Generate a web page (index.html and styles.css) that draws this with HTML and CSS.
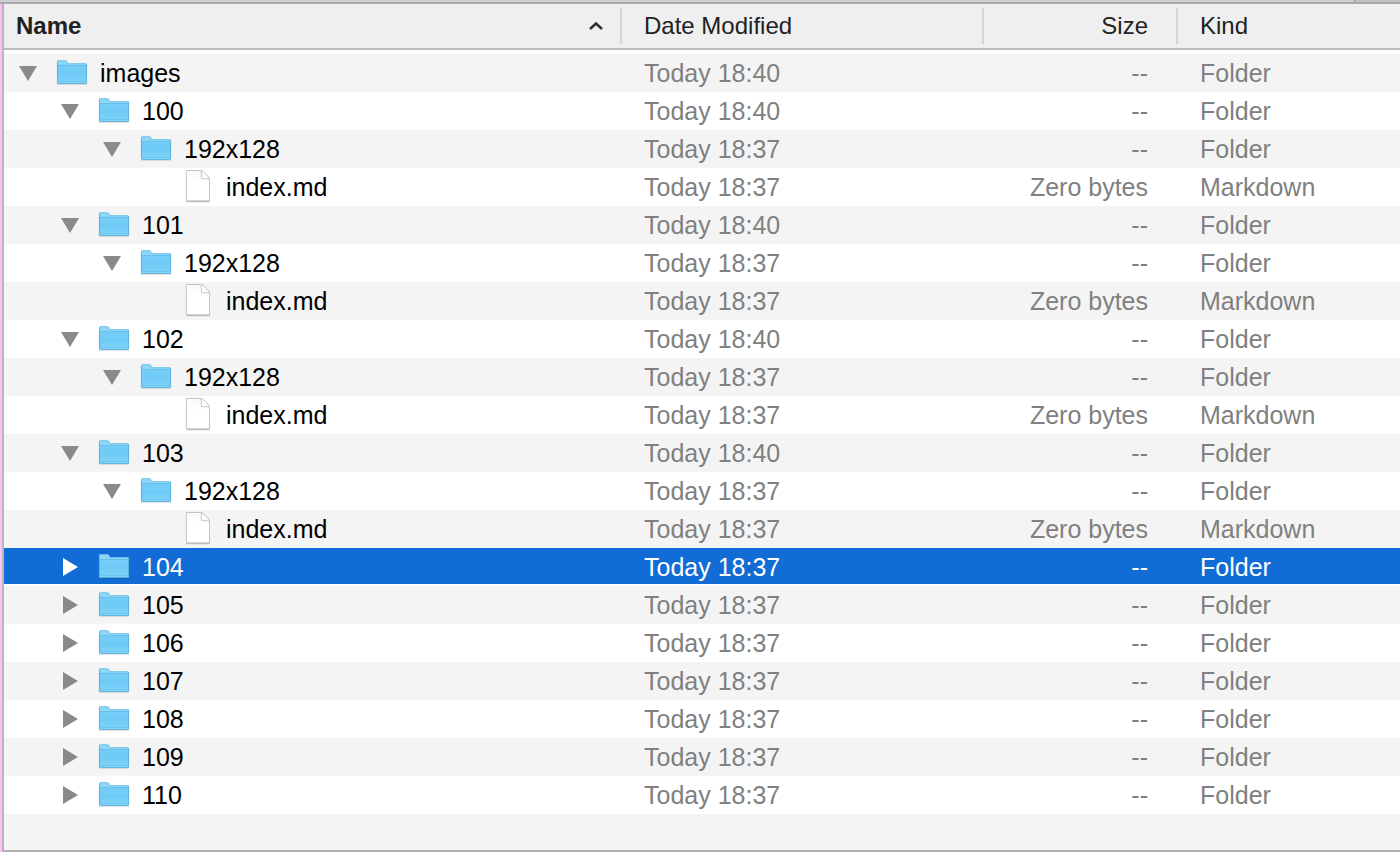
FILE: index.html
```html
<!DOCTYPE html>
<html lang="en">
<head>
<meta charset="utf-8">
<title>images</title>
<link rel="stylesheet" href="styles.css">
</head>
<body>
<svg class="defs" aria-hidden="true">
  <defs>
    <linearGradient id="blue" x1="0" y1="0" x2="0" y2="1">
      <stop offset="0" stop-color="#74cdf7"/>
      <stop offset="0.5" stop-color="#6ecbf6"/>
      <stop offset="1" stop-color="#84d4fa"/>
    </linearGradient>
    <linearGradient id="paper" x1="0" y1="0" x2="0" y2="1">
      <stop offset="0" stop-color="#f9f9f9"/>
      <stop offset="0.4" stop-color="#ffffff"/>
    </linearGradient>
    <symbol id="folder" viewBox="0 0 32 38">
      <path d="M1 29.5h30v1.2H1z" fill="#000" opacity="0.16"/>
      <path d="M1 7.5Q1 6.300 2.200 6.300H9.500Q10.500 6.300 11 7.200L11.600 8.400Q12 9.300 13 9.300H30Q31 9.300 31 10.300V14H1z" fill="#8dd6f8"/>
      <path d="M1 11.500H31V28.800Q31 29.800 30 29.800H2Q1 29.800 1 28.800z" fill="url(#blue)"/>
      <path d="M1 11.500H31" stroke="#5dbce8" stroke-width="0.800"/>
      <path d="M1.500 27.500H30.500" stroke="#62bde6" stroke-width="0.600"/>
      <path d="M1.400 8V28.800Q1.400 29.500 2.200 29.500H29.800Q30.600 29.500 30.600 28.800V10" fill="none" stroke="#57acd3" stroke-width="0.800"/>
      <path d="M1.400 8Q1.400 6.700 2.400 6.700H9.500Q10.300 6.700 10.700 7.500L11.300 8.700Q11.700 9.600 12.700 9.600H30" fill="none" stroke="#69bfe4" stroke-width="0.700"/>
    </symbol>
    <symbol id="file" viewBox="0 0 32 38">
      <path d="M4.500 34H28" stroke="#000" stroke-width="1" opacity="0.100"/>
      <path d="M5 2.500H18.500C21 2.500 27.500 9 27.500 11.500V33H5Q4.300 33 4.300 32.300V3.200Q4.300 2.500 5 2.500z" fill="url(#paper)" stroke="#c3c3c3" stroke-width="1"/>
      <path d="M18.500 2.500C20 4 19 8 19.500 10.500C22 11 26 10 27.500 11.500C27 8.500 21.500 3 18.500 2.500z" fill="#fff" stroke="#c8c8c8" stroke-width="1"/>
      <path d="M4.300 33.200H27.700" stroke="#aaa" stroke-width="0.800"/>
    </symbol>
    <symbol id="open" viewBox="0 0 24 38"><path d="M3 12H21L12 27z"/></symbol>
    <symbol id="closed" viewBox="0 0 24 38"><path d="M5 10L20 19L5 28z"/></symbol>
  </defs>
</svg>
<div class="tabs"><div class="tab"></div><div class="tab tab-back"></div></div>
<main class="window">
<table class="list">
<colgroup><col><col class="col-date"><col class="col-size"><col class="col-kind"></colgroup>
<thead>
<tr>
  <th scope="col" aria-sort="ascending"><button class="sort">Name<svg class="caret" viewBox="0 0 16 10" aria-hidden="true"><path d="M2 8L8 2.500L14 8"/></svg></button></th>
  <th scope="col"><button class="sort">Date Modified</button></th>
  <th scope="col" class="size"><button class="sort">Size</button></th>
  <th scope="col"><button class="sort">Kind</button></th>
</tr>
</thead>
<tbody>
<tr><td><div class="item"><button class="toggle" aria-label="Collapse images"><svg><use href="#open"/></svg></button><svg class="icon"><use href="#folder"/></svg><span>images</span></div></td><td>Today 18:40</td><td class="size">--</td><td>Folder</td></tr>
<tr><td><div class="item level-1"><button class="toggle" aria-label="Collapse 100"><svg><use href="#open"/></svg></button><svg class="icon"><use href="#folder"/></svg><span>100</span></div></td><td>Today 18:40</td><td class="size">--</td><td>Folder</td></tr>
<tr><td><div class="item level-2"><button class="toggle" aria-label="Collapse 192x128"><svg><use href="#open"/></svg></button><svg class="icon"><use href="#folder"/></svg><span>192x128</span></div></td><td>Today 18:37</td><td class="size">--</td><td>Folder</td></tr>
<tr><td><div class="item level-3"><svg class="icon"><use href="#file"/></svg><span>index.md</span></div></td><td>Today 18:37</td><td class="size">Zero bytes</td><td>Markdown</td></tr>
<tr><td><div class="item level-1"><button class="toggle" aria-label="Collapse 101"><svg><use href="#open"/></svg></button><svg class="icon"><use href="#folder"/></svg><span>101</span></div></td><td>Today 18:40</td><td class="size">--</td><td>Folder</td></tr>
<tr><td><div class="item level-2"><button class="toggle" aria-label="Collapse 192x128"><svg><use href="#open"/></svg></button><svg class="icon"><use href="#folder"/></svg><span>192x128</span></div></td><td>Today 18:37</td><td class="size">--</td><td>Folder</td></tr>
<tr><td><div class="item level-3"><svg class="icon"><use href="#file"/></svg><span>index.md</span></div></td><td>Today 18:37</td><td class="size">Zero bytes</td><td>Markdown</td></tr>
<tr><td><div class="item level-1"><button class="toggle" aria-label="Collapse 102"><svg><use href="#open"/></svg></button><svg class="icon"><use href="#folder"/></svg><span>102</span></div></td><td>Today 18:40</td><td class="size">--</td><td>Folder</td></tr>
<tr><td><div class="item level-2"><button class="toggle" aria-label="Collapse 192x128"><svg><use href="#open"/></svg></button><svg class="icon"><use href="#folder"/></svg><span>192x128</span></div></td><td>Today 18:37</td><td class="size">--</td><td>Folder</td></tr>
<tr><td><div class="item level-3"><svg class="icon"><use href="#file"/></svg><span>index.md</span></div></td><td>Today 18:37</td><td class="size">Zero bytes</td><td>Markdown</td></tr>
<tr><td><div class="item level-1"><button class="toggle" aria-label="Collapse 103"><svg><use href="#open"/></svg></button><svg class="icon"><use href="#folder"/></svg><span>103</span></div></td><td>Today 18:40</td><td class="size">--</td><td>Folder</td></tr>
<tr><td><div class="item level-2"><button class="toggle" aria-label="Collapse 192x128"><svg><use href="#open"/></svg></button><svg class="icon"><use href="#folder"/></svg><span>192x128</span></div></td><td>Today 18:37</td><td class="size">--</td><td>Folder</td></tr>
<tr><td><div class="item level-3"><svg class="icon"><use href="#file"/></svg><span>index.md</span></div></td><td>Today 18:37</td><td class="size">Zero bytes</td><td>Markdown</td></tr>
<tr class="selected"><td><div class="item level-1"><button class="toggle" aria-label="Expand 104"><svg><use href="#closed"/></svg></button><svg class="icon"><use href="#folder"/></svg><span>104</span></div></td><td>Today 18:37</td><td class="size">--</td><td>Folder</td></tr>
<tr><td><div class="item level-1"><button class="toggle" aria-label="Expand 105"><svg><use href="#closed"/></svg></button><svg class="icon"><use href="#folder"/></svg><span>105</span></div></td><td>Today 18:37</td><td class="size">--</td><td>Folder</td></tr>
<tr><td><div class="item level-1"><button class="toggle" aria-label="Expand 106"><svg><use href="#closed"/></svg></button><svg class="icon"><use href="#folder"/></svg><span>106</span></div></td><td>Today 18:37</td><td class="size">--</td><td>Folder</td></tr>
<tr><td><div class="item level-1"><button class="toggle" aria-label="Expand 107"><svg><use href="#closed"/></svg></button><svg class="icon"><use href="#folder"/></svg><span>107</span></div></td><td>Today 18:37</td><td class="size">--</td><td>Folder</td></tr>
<tr><td><div class="item level-1"><button class="toggle" aria-label="Expand 108"><svg><use href="#closed"/></svg></button><svg class="icon"><use href="#folder"/></svg><span>108</span></div></td><td>Today 18:37</td><td class="size">--</td><td>Folder</td></tr>
<tr><td><div class="item level-1"><button class="toggle" aria-label="Expand 109"><svg><use href="#closed"/></svg></button><svg class="icon"><use href="#folder"/></svg><span>109</span></div></td><td>Today 18:37</td><td class="size">--</td><td>Folder</td></tr>
<tr><td><div class="item level-1"><button class="toggle" aria-label="Expand 110"><svg><use href="#closed"/></svg></button><svg class="icon"><use href="#folder"/></svg><span>110</span></div></td><td>Today 18:37</td><td class="size">--</td><td>Folder</td></tr>
</tbody>
</table>
<div class="rest"></div>
</main>
</body>
</html>
```
FILE: styles.css
```css
* {
  box-sizing: border-box;
}

body {
  margin: 0;
  min-height: 100vh;
  display: flex;
  flex-direction: column;
  background: #fff;
  color: #000;
  font-family: "Liberation Sans", Arial, sans-serif;
  font-size: 25px;
  line-height: 38px;
}

button {
  margin: 0;
  padding: 0;
  border: 0;
  background: none;
  color: inherit;
  font: inherit;
}

.defs {
  position: absolute;
  width: 0;
  height: 0;
}

.tabs {
  display: flex;
  height: 4px;
  border-bottom: 2px solid #aaa;
}

.tab {
  flex: 1;
  background: #d0d0d0;
}

.tab-back {
  flex: 0 0 46px;
  border-left: 2px solid #aaa;
  background: #c0c0c0;
}

.window {
  flex: 1;
  display: flex;
  flex-direction: column;
  border-left: 2px solid #b7b7b7;
  border-bottom: 2px solid #b3b3b3;
  margin-left: 2px;
  box-shadow: -2px 0 #fbc0fb;
}

.list {
  width: 100%;
  table-layout: fixed;
  border-collapse: separate;
  border-spacing: 0;
}

.col-date {
  width: 362px;
}

.col-size {
  width: 194px;
}

.col-kind {
  width: 224px;
}

th {
  height: 46px;
  padding: 4px 0 4px;
  border-bottom: 2px solid #bbb;
  background: #efefef;
  color: #222;
  font-size: 24px;
  font-weight: 400;
  line-height: 36px;
  text-align: left;
}

.sort {
  display: block;
  width: 100%;
  padding: 0 28px 0 22px;
  border-left: 2px solid #d5d5d5;
  text-align: inherit;
}

th:first-child .sort {
  display: flex;
  align-items: center;
  justify-content: space-between;
  padding: 0 16px 0 12px;
  border-left: 0;
  font-weight: 700;
}

.caret {
  width: 16px;
  height: 10px;
  fill: none;
  stroke: #333;
  stroke-width: 2.500;
}

td {
  height: 38px;
  padding: 0 0 0 24px;
  color: #808080;
  white-space: nowrap;
}

td:first-child {
  padding: 0 0 0 12px;
  color: #000;
}

.list .size {
  text-align: right;
}

td.size {
  padding-right: 28px;
}

tbody::before {
  content: "";
  display: table-row;
  height: 4px;
}

tbody tr:nth-child(odd) {
  background: #f4f4f4;
}

tbody .selected {
  background: linear-gradient(#116cd6 36px, #fff 36px);
}

.selected td,
.selected td:first-child {
  color: #fff;
}

.item {
  display: flex;
  height: 38px;
}

.level-1 {
  padding-left: 42px;
}

.level-2 {
  padding-left: 84px;
}

.level-3 {
  padding-left: 166px;
}

.toggle {
  width: 24px;
  margin-right: 16px;
  fill: #8a8a8a;
}

.toggle svg {
  display: block;
  width: 24px;
  height: 38px;
}

.selected .toggle {
  fill: #fff;
}

.icon {
  flex: none;
  width: 32px;
  height: 38px;
  margin-right: 12px;
}

.rest {
  flex: 1;
  background: #f4f4f4;
}
```
